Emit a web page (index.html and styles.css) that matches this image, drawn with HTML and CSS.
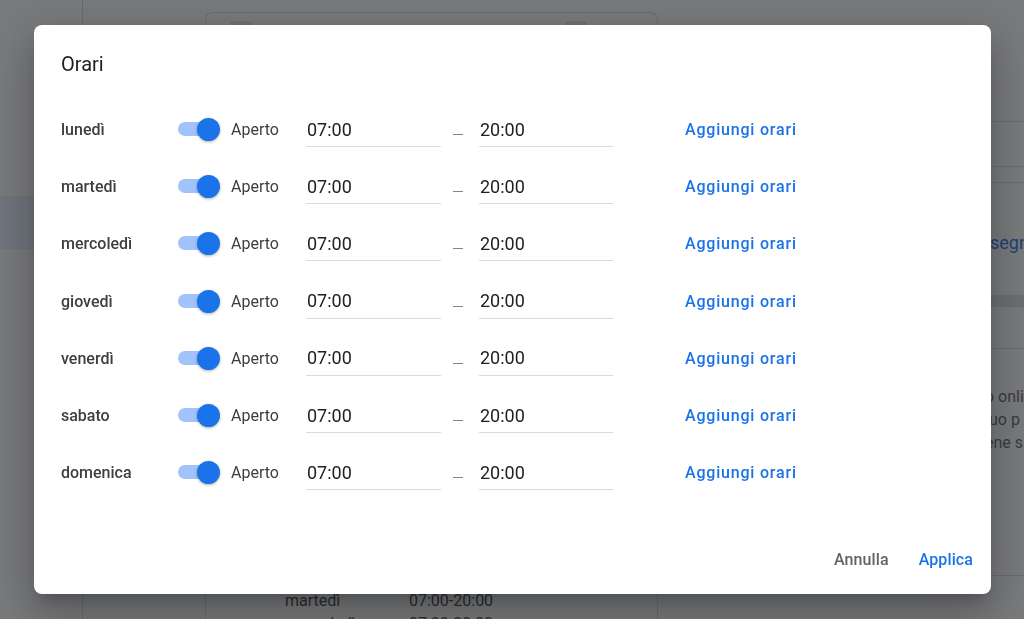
FILE: index.html
```html
<!DOCTYPE html>
<html lang="it">
<head>
<meta charset="utf-8">
<title>Orari</title>
<link rel="stylesheet" href="styles.css">
</head>
<body>
<div class="page">
  <aside class="sidebar">
    <div class="nav-item"></div>
  </aside>
  <main class="content">
    <section class="card">
      <div class="card-head"><span class="ic"></span><span class="ic"></span></div>
      <div class="card-body"></div>
      <div class="hours-list">
        <div class="hrow"><span class="hday">martedì</span><span>07:00-20:00</span></div>
        <div class="hrow"><span class="hday">mercoledì</span><span>07:00-20:00</span></div>
      </div>
    </section>
    <section class="side-panel">
      <div class="sp-block sp-a"></div>
      <div class="sp-block sp-b"></div>
      <div class="sp-block sp-c"></div>
      <div class="sp-link">segn</div>
      <div class="sp-band"></div>
      <div class="sp-block sp-d"></div>
      <div class="sp-text">
        <div>o onli</div>
        <div class="sp-indent">uo p</div>
        <div>ene s</div>
      </div>
    </section>
  </main>
</div>
<div class="scrim"></div>
<div class="dialog" role="dialog">
  <h2 class="dialog-title">Orari</h2>
  <div class="days">
    <div class="day-row"><span class="day">lunedì</span><span class="toggle"><span class="track"></span><span class="thumb"></span></span><span class="state">Aperto</span><span class="time-field">07:00</span><span class="dash"></span><span class="time-field">20:00</span><span></span><span class="link">Aggiungi orari</span></div>
    <div class="day-row"><span class="day">martedì</span><span class="toggle"><span class="track"></span><span class="thumb"></span></span><span class="state">Aperto</span><span class="time-field">07:00</span><span class="dash"></span><span class="time-field">20:00</span><span></span><span class="link">Aggiungi orari</span></div>
    <div class="day-row"><span class="day">mercoledì</span><span class="toggle"><span class="track"></span><span class="thumb"></span></span><span class="state">Aperto</span><span class="time-field">07:00</span><span class="dash"></span><span class="time-field">20:00</span><span></span><span class="link">Aggiungi orari</span></div>
    <div class="day-row"><span class="day">giovedì</span><span class="toggle"><span class="track"></span><span class="thumb"></span></span><span class="state">Aperto</span><span class="time-field">07:00</span><span class="dash"></span><span class="time-field">20:00</span><span></span><span class="link">Aggiungi orari</span></div>
    <div class="day-row"><span class="day">venerdì</span><span class="toggle"><span class="track"></span><span class="thumb"></span></span><span class="state">Aperto</span><span class="time-field">07:00</span><span class="dash"></span><span class="time-field">20:00</span><span></span><span class="link">Aggiungi orari</span></div>
    <div class="day-row"><span class="day">sabato</span><span class="toggle"><span class="track"></span><span class="thumb"></span></span><span class="state">Aperto</span><span class="time-field">07:00</span><span class="dash"></span><span class="time-field">20:00</span><span></span><span class="link">Aggiungi orari</span></div>
    <div class="day-row"><span class="day">domenica</span><span class="toggle"><span class="track"></span><span class="thumb"></span></span><span class="state">Aperto</span><span class="time-field">07:00</span><span class="dash"></span><span class="time-field">20:00</span><span></span><span class="link">Aggiungi orari</span></div>
  </div>
  <div class="footer">
    <button class="btn btn-cancel">Annulla</button>
    <button class="btn btn-apply">Applica</button>
  </div>
</div>
</body>
</html>
```

FILE: styles.css
```css
html, body {
  margin: 0;
  padding: 0;
  width: 1024px;
  height: 619px;
  overflow: hidden;
  background: #fff;
  font-family: Roboto, "Noto Sans", Arial, sans-serif;
}

.page {
  display: flex;
  width: 1024px;
  height: 619px;
}

.sidebar {
  width: 82px;
  flex: none;
  border-right: 1px solid #d6d6d6;
}

.nav-item {
  margin-top: 196px;
  height: 53px;
  background: #e8f0fe;
}

.content {
  flex: 1;
  display: flex;
  align-items: flex-start;
  padding-left: 122px;
}

.card {
  width: 453px;
  flex: none;
  margin-top: 12px;
  border: 1px solid #dadce0;
  border-bottom: 0;
  border-radius: 8px 8px 0 0;
  box-sizing: border-box;
  display: flex;
  flex-direction: column;
}

.card-head {
  flex: none;
  display: flex;
  justify-content: space-between;
  padding: 8px 70px 0 24px;
}

.ic {
  width: 22px;
  height: 14px;
  border-radius: 3px;
  background: #e3e3e3;
}

.card-body {
  flex: none;
  height: 554px;
}

.hours-list {
  flex: none;
  padding-left: 79px;
  font-size: 16px;
  color: #3c4043;
}

.hrow {
  display: flex;
  line-height: 23px;
}

.hday {
  width: 124px;
}

.side-panel {
  flex: 1;
  display: flex;
  flex-direction: column;
}

.sp-block {
  flex: none;
  border-bottom: 1px solid #dadce0;
}

.sp-a { height: 121px; }
.sp-b { height: 44px; }
.sp-c { height: 15px; }

.sp-link {
  flex: none;
  height: 112px;
  box-sizing: border-box;
  padding: 48px 0 0 332px;
  font-size: 18px;
  line-height: 24px;
  color: #1a73e8;
  white-space: nowrap;
}

.sp-band {
  flex: none;
  height: 12px;
  background: #e1e1e1;
}

.sp-d { height: 41px; }

.sp-text {
  flex: none;
  padding: 36px 0 0 327px;
  font-size: 16px;
  line-height: 23px;
  color: #5f6368;
  white-space: nowrap;
  height: 227px;
  box-sizing: border-box;
  border-bottom: 1px solid #dadce0;
}

.sp-indent {
  padding-left: 4px;
}

.scrim {
  position: fixed;
  inset: 0;
  background: rgba(32, 33, 36, 0.6);
}

.dialog {
  position: absolute;
  left: 34px;
  top: 25px;
  width: 957px;
  height: 569px;
  box-sizing: border-box;
  padding: 25px 10px 17px 27px;
  background: #fff;
  border-radius: 8px;
  box-shadow: 0 11px 15px -7px rgba(0, 0, 0, 0.2), 0 24px 38px 3px rgba(0, 0, 0, 0.14), 0 9px 46px 8px rgba(0, 0, 0, 0.12);
  display: flex;
  flex-direction: column;
}

.dialog-title {
  margin: 0;
  font-size: 20px;
  line-height: 28px;
  font-weight: 400;
  color: #202124;
}

.days {
  margin-top: 23px;
}

.day-row {
  display: grid;
  grid-template-columns: 117px 53px 75px 135px 38px 134px 72px auto;
  align-items: center;
  height: 57.2px;
}

.day {
  font-size: 16px;
  font-weight: 500;
  color: #3c4043;
}

.toggle {
  position: relative;
  width: 42px;
  height: 23px;
}

.track {
  position: absolute;
  left: 0;
  top: 4px;
  width: 37px;
  height: 14px;
  border-radius: 7px;
  background: #a1c2fa;
}

.thumb {
  position: absolute;
  left: 19px;
  top: 0;
  width: 23px;
  height: 23px;
  border-radius: 50%;
  background: #1a73e8;
  box-shadow: 0 1px 3px rgba(0, 0, 0, 0.3);
}

.state {
  font-size: 16px;
  color: #3c4043;
}

.time-field {
  height: 35px;
  box-sizing: border-box;
  border-bottom: 1px solid #dadce0;
  display: flex;
  align-items: center;
  padding-left: 1px;
  font-size: 18px;
  color: #202124;
}

.dash {
  justify-self: start;
  margin-left: 12px;
  margin-top: 10px;
  width: 10px;
  height: 1px;
  background: #80868b;
}

.link {
  font-size: 16px;
  font-weight: 500;
  letter-spacing: 0.8px;
  color: #1a73e8;
  white-space: nowrap;
}

.footer {
  margin-top: auto;
  display: flex;
  justify-content: flex-end;
  gap: 14px;
}

.btn {
  height: 36px;
  padding: 0 8px;
  border: 0;
  background: none;
  font-family: Roboto, "Noto Sans", Arial, sans-serif;
  font-size: 16px;
  font-weight: 500;
  letter-spacing: 0.1px;
}

.btn-cancel { color: #5f6368; }
.btn-apply { color: #1a73e8; }
```
